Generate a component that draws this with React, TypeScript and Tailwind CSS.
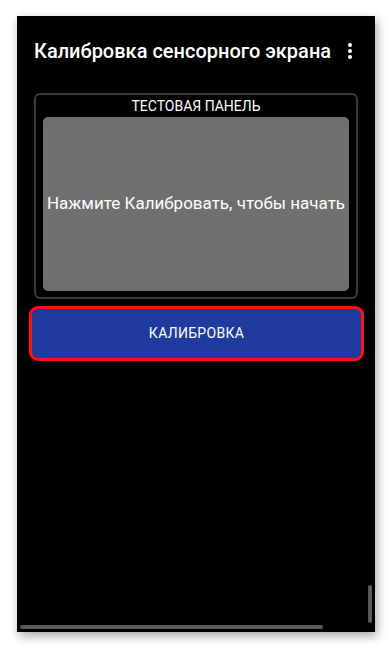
function MoreIcon() {
  return (
    <div className="flex flex-col items-center gap-[2px]">
      <span className="block w-[4px] h-[4px] rounded-full bg-white" />
      <span className="block w-[4px] h-[4px] rounded-full bg-white" />
      <span className="block w-[4px] h-[4px] rounded-full bg-white" />
    </div>
  )
}

export default function App() {
  return (
    <div className="w-[391px] h-[648px] bg-white pt-[16px] pl-[17px] font-['Roboto','Noto_Sans',sans-serif]">
      <div className="relative w-[358px] h-[616px] bg-black shadow-[2px_4px_10px_rgba(0,0,0,0.35)]">
        <header className="h-[70px] flex items-center justify-between pl-[17px] pr-[23px]">
          <h1 className="text-white text-[20px] font-medium">
            Калибровка сенсорного экрана
          </h1>
          <MoreIcon />
        </header>

        <section className="mt-[7px] ml-[17px] w-[324px] h-[206px] border-2 border-[#3a3a3a] rounded-[6px] px-[7px] pb-[6px] flex flex-col">
          <div className="h-[22px] flex items-center justify-center text-white text-[14px] pt-[1px]">
            ТЕСТОВАЯ ПАНЕЛЬ
          </div>
          <div className="flex-1 bg-[#6f6f6f] rounded-[5px] flex items-center justify-center text-white text-[17px] whitespace-nowrap">
            Нажмите Калибровать, чтобы начать
          </div>
        </section>

        <button className="mt-[7px] ml-[12px] w-[335px] h-[55px] rounded-[9px] border-[3px] border-[#ff1010] bg-[#1e3a9c] text-white text-[14px] tracking-[0.3px] flex items-center justify-center">
          КАЛИБРОВКА
        </button>

        <div className="absolute left-[3px] top-[609px] w-[303px] h-[4px] rounded-full bg-[#5a5a5a]" />
        <div className="absolute left-[351px] top-[569px] w-[4px] h-[38px] rounded-full bg-[#5a5a5a]" />
      </div>
    </div>
  )
}
